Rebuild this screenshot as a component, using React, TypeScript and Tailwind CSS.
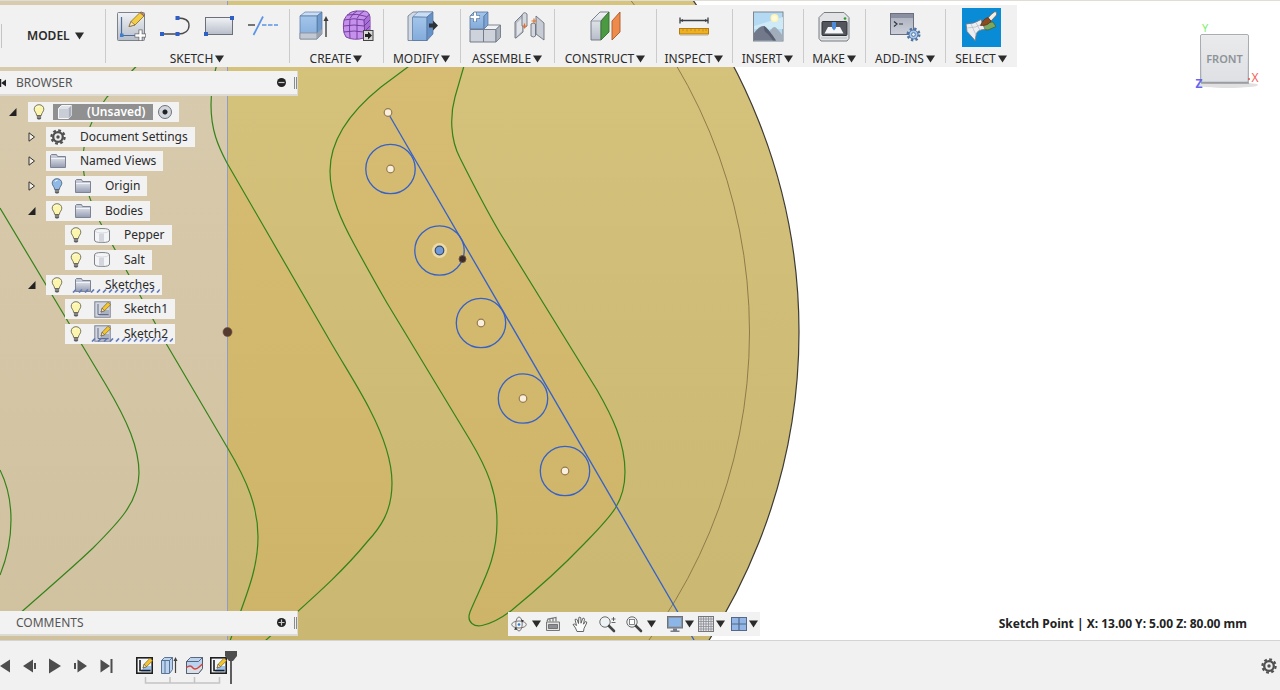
import type { ReactNode } from "react"

const BLUE = "#2f5fc4"

/* ---------- shared bits ---------- */

function Caret({ className = "" }: { className?: string }) {
  return (
    <svg viewBox="0 0 9 8" className={`h-2 w-[9px] shrink-0 ${className}`} aria-hidden="true">
      <path d="M0 0.5h9L4.5 7.5z" fill="#2b2b2b" />
    </svg>
  )
}

function ToolIcon({ children }: { children: ReactNode }) {
  return (
    <svg viewBox="0 0 30 32" className="h-8 w-[30px] overflow-visible" aria-hidden="true">
      {children}
    </svg>
  )
}

/* ---------- toolbar icons ---------- */

const icons = {
  sketch: (
    <ToolIcon>
      <rect x="1.500" y="1.500" width="27" height="28" rx="1" fill="url(#steel)" stroke="#7c828c" />
      <path d="M5.500 6v18.500H21" fill="none" stroke="#4c6a9c" strokeWidth="1.200" />
      <rect x="4" y="22.500" width="3.500" height="3.500" fill="#3f7fd0" />
      <path d="M13 15.500l2-5L24 1.500l4 3.500-9 9z" fill="#f3ce45" stroke="#8a6a1c" strokeWidth="0.800" />
      <path d="M24 1.500l1.500-0.500L28.500 3.500 28 5z" fill="#c98b7c" stroke="#7d5a49" strokeWidth="0.700" />
      <path d="M13 15.500l2-5 4 3.500z" fill="#f6e3bd" stroke="#6d5524" strokeWidth="0.600" />
      <path d="M24.500 18.500v11.500M18.500 24.500H30" stroke="#6c6c6c" strokeWidth="4" />
      <path d="M24.500 19.300v10M19.300 24.500h10" stroke="#fff" strokeWidth="2.400" />
    </ToolIcon>
  ),
  line: (
    <ToolIcon>
      <path d="M2 23h16c7 0 11-3.500 11-8.500S25 7 18 7" fill="none" stroke="#4b4b4b" strokeWidth="1.400" />
      <path d="M0 21h4v4H0zM15.500 21h4v4h-4zM15.500 5h4v4h-4z" fill={BLUE} />
    </ToolIcon>
  ),
  rect: (
    <ToolIcon>
      <rect x="1.500" y="6.500" width="27" height="17" fill="url(#steel)" stroke="#6a6f7a" />
      <path d="M0 21h4v4H0zM26 5h4v4h-4z" fill={BLUE} />
    </ToolIcon>
  ),
  trim: (
    <ToolIcon>
      <path d="M0 14h7" stroke="#4b4b4b" strokeWidth="1.500" />
      <path d="M5.500 24L15 5.500" stroke="#5b94e6" strokeWidth="1.700" />
      <path d="M14 14h16" stroke="#5b94e6" strokeWidth="1.500" strokeDasharray="4.500 1.500" />
    </ToolIcon>
  ),
  extrude: (
    <ToolIcon>
      <path d="M1 5l5-4h17l-5 4z" fill="#c9def4" stroke="#5c7da6" strokeWidth="0.700" />
      <path d="M18 5l5-4v22l-5 5z" fill="#6f9ccd" stroke="#55739c" strokeWidth="0.700" />
      <path d="M1 5h17v23H1z" fill="url(#bluebox)" stroke="#55739c" strokeWidth="0.700" />
      <path d="M1 22h17v6H1z" fill="#c3c8d2" stroke="#7d8694" strokeWidth="0.700" />
      <path d="M18 22l5-4v5l-5 5z" fill="#9ba2af" />
      <path d="M27 26V8" stroke="#3e3e3e" strokeWidth="1.400" />
      <path d="M24.500 10L27 5l2.500 5z" fill="#3e3e3e" />
    </ToolIcon>
  ),
  form: (
    <ToolIcon>
      <path d="M1 9Q5 0.500 13 0h8q5 0 6 6v13q-2 6-6 8-10 3-18-1Q-1 20 1 9z" fill="#c591ec" stroke="#7a45a5" />
      <path d="M20.500 9l5-5q3 8 1 16l-5 6q1-9-1-17z" fill="#a96dd6" />
      <path d="M7 8q-1 9 0 19M14 8q0 10 0 20M21 9q1 9 0 18M0.500 15q11-2 20.500 0l6-6M0.500 21q11-2 20.500 0l6-6M1 9q10-2.500 20 0l5.500-6M7 7.500Q9 3 14 0M14 7.500Q16 3 21 0M4 4q10-2 19.500 1.500" fill="none" stroke="#6b3796" strokeWidth="0.900" />
      <rect x="20.500" y="19.500" width="9.500" height="10" fill="#d8d8d8" stroke="#444" />
      <path d="M22 23h3v-2.500l4 4-4 4V26h-3z" fill="#222" />
    </ToolIcon>
  ),
  modify: (
    <ToolIcon>
      <path d="M1 5l5-4h20l-6 5v23.500H1z" fill="#d3d9e3" stroke="#66758e" strokeWidth="0.800" />
      <path d="M5.500 6H20v23.500H5.500z" fill="url(#bluebox)" stroke="#55739c" strokeWidth="0.700" />
      <path d="M6 5.500L11 1h15l-6 5z" fill="#c9def4" stroke="#5c7da6" strokeWidth="0.600" />
      <path d="M20 6l6-5v22l-6 6.500z" fill="#6692c8" stroke="#55739c" strokeWidth="0.700" />
      <path d="M22 12.500h4V9.500l5 5-5 5v-3h-4z" fill="#2e3338" />
    </ToolIcon>
  ),
  component: (
    <ToolIcon>
      <path d="M0 5l4-4h14l-4 4v13H0z" fill="url(#bluebox)" stroke="#55739c" strokeWidth="0.800" />
      <path d="M14 5l4-4v14l-4 3z" fill="#7fa5d6" stroke="#55739c" strokeWidth="0.700" />
      <path d="M0 18.500h13.500V31H0zM13.500 18.500H26V31H13.500z" fill="#cdd2db" stroke="#737b88" />
      <path d="M13.500 18.500l4.500-4.500h12.500l-4.500 4.500z" fill="#f0f2f5" stroke="#737b88" strokeWidth="0.900" />
      <path d="M26 18.500l4.500-4.500v12.500L26 31z" fill="#aab1bd" stroke="#737b88" strokeWidth="0.900" />
      <path d="M5 1v10M0 6h10" stroke="#59789e" strokeWidth="3.800" />
      <path d="M5 1.500v9M0.500 6h9" stroke="#fff" strokeWidth="2.300" />
    </ToolIcon>
  ),
  joint: (
    <ToolIcon>
      <path d="M1 11L9 3v18l-7 6H1z" fill="#b9bec8" stroke="#6b727e" strokeWidth="0.900" />
      <path d="M3 12l5-5v13l-5 5z" fill="#e1e4e9" />
      <path d="M8 4q2-4 5-1v12q-2 3-5 0z" fill="#d3d7de" stroke="#6b727e" strokeWidth="0.900" />
      <path d="M17 13q2-2 4.500 0v12q-2 2-4.500 0z" fill="#d3d7de" stroke="#6b727e" strokeWidth="0.900" />
      <path d="M22 5l8 7v17l-8-6z" fill="#c6cbd4" stroke="#6b727e" strokeWidth="0.900" />
      <path d="M10.500 12.500v5M8 15h5M20 7.500v5M17.500 10h5" stroke="#e2702a" strokeWidth="1.200" />
    </ToolIcon>
  ),
  construct: (
    <ToolIcon>
      <path d="M1 10l9-9h9l-8 9v19H1z" fill="url(#steel)" stroke="#6c7480" strokeWidth="0.900" />
      <path d="M11 10l8-9v20l-8 8z" fill="#4b9a42" stroke="#356f30" strokeWidth="0.900" />
      <path d="M1 10h10" stroke="#8a919c" strokeWidth="0.800" />
      <path d="M22 10l8-9v20l-8 8z" fill="#ee8a4b" stroke="#a85a28" strokeWidth="0.900" />
    </ToolIcon>
  ),
  inspect: (
    <ToolIcon>
      <path d="M1 9.500h28M1 6.500v6M29 6.500v6" stroke="#3b4046" strokeWidth="1.300" />
      <path d="M1 9.500l3-1.500v3zM29 9.500L26 8v3z" fill="#3b4046" />
      <rect x="0.500" y="17.500" width="29" height="5.500" fill="#efb021" stroke="#b27c12" />
      <path d="M4 18v2M8 18v2.500M12 18v2M16 18v2.500M20 18v2M24 18v2.500M27 18v2" stroke="#b78320" strokeWidth="0.700" />
      <path d="M1 24.500h28" stroke="#cfcfcf" />
    </ToolIcon>
  ),
  insert: (
    <ToolIcon>
      <rect x="0.500" y="1" width="29.500" height="29" fill="#b3daf2" stroke="#7f868f" />
      <path d="M1 15l29-9v12H1z" fill="#cdeaf6" />
      <circle cx="21.500" cy="7" r="4" fill="#fff4b5" />
      <circle cx="21.500" cy="7" r="2.600" fill="#fffad9" />
      <path d="M10 29.500Q19 15 22 16q3 2 8 9v4.500z" fill="#a2adbb" />
      <path d="M1 22q6-8 10-7 3 1 12 14.500H1z" fill="#71798a" />
      <path d="M11 15q-1 5 4 8l5 6.500h3Q14 16 11 15z" fill="#565e70" />
    </ToolIcon>
  ),
  make: (
    <ToolIcon>
      <path d="M5 1.500h20l5 5v21l-2 2.500H2l-2-2.500v-21z" fill="#e1e3e5" stroke="#777c82" />
      <rect x="3" y="10.500" width="25" height="14" rx="1" fill="#53565c" stroke="#2f3236" />
      <path d="M9 16h12l3.500 6.500h-19z" fill="#f6f7f8" />
      <path d="M13 11h4v6l-2 2.500-2-2.500z" fill="#4d8cd8" />
      <circle cx="26" cy="7.500" r="1.300" fill="#2d9b2d" />
      <path d="M2 27h26" stroke="#b8bcc1" />
    </ToolIcon>
  ),
  addins: (
    <ToolIcon>
      <rect x="0.500" y="2.500" width="23" height="21" fill="url(#script)" stroke="#6b7080" />
      <path d="M1 3h22v4H1z" fill="#8a90a1" />
      <path d="M4 10.500l3 2.500-3 2.500M9 13h4" fill="none" stroke="#30343f" strokeWidth="1.200" />
      <circle cx="23.500" cy="23.500" r="5.500" fill="none" stroke="#4f74a3" strokeWidth="3" strokeDasharray="2.200 2.120" />
      <circle cx="23.500" cy="23.500" r="4.500" fill="#a9c7ea" stroke="#4f74a3" />
      <circle cx="23.500" cy="23.500" r="1.900" fill="#eef4fb" stroke="#4f74a3" />
    </ToolIcon>
  ),
  select: (
    <span className="flex size-[39px] items-center justify-center bg-[#0a8bd6]">
      <ToolIcon>
        <path d="M14 12l13-1 3 4.500-8 3.500-8-1z" fill="#79a860" stroke="#3e6433" strokeWidth="0.800" />
        <path d="M0 13Q8 13 15 8.500l4 10q-7 0-8.500 4-1 3-1 7.500L1 20.500z" fill="#eceef1" stroke="#6f7b88" strokeWidth="0.900" />
        <path d="M5 13l5 11M10 11.500l4 8M0.800 17q9 0 16-4" fill="none" stroke="#aab2bc" strokeWidth="0.600" />
        <path d="M29 0.500q2.500 1 1.500 3.500L25 10l-3-3q3-4 7-6.500z" fill="#f6efe4" stroke="#6d5b4b" strokeWidth="0.700" />
        <path d="M14.500 14.500Q17 8 22 6.500l3 3.500q-3 5-10.500 4.500z" fill="#8a4b22" stroke="#5a2d12" strokeWidth="0.700" />
      </ToolIcon>
    </span>
  ),
}

interface ToolGroup {
  label: string
  width: string
  icons: (keyof typeof icons)[]
}

const toolGroups: ToolGroup[] = [
  { label: "SKETCH", width: "w-[184px]", icons: ["sketch", "line", "rect", "trim"] },
  { label: "CREATE", width: "w-[94px]", icons: ["extrude", "form"] },
  { label: "MODIFY", width: "w-[77px]", icons: ["modify"] },
  { label: "ASSEMBLE", width: "w-[94px]", icons: ["component", "joint"] },
  { label: "CONSTRUCT", width: "w-[102px]", icons: ["construct"] },
  { label: "INSPECT", width: "w-[76px]", icons: ["inspect"] },
  { label: "INSERT", width: "w-[71px]", icons: ["insert"] },
  { label: "MAKE", width: "w-[62px]", icons: ["make"] },
  { label: "ADD-INS", width: "w-[80px]", icons: ["addins"] },
  { label: "SELECT", width: "w-[72px]", icons: ["select"] },
]

function Toolbar() {
  return (
    <header className="flex h-[62px] w-fit bg-[#f1f1f1]">
      <div className="flex w-[105px] items-center">
        <span className="h-6 w-0.5 border-r border-[#c4c4c4]" />
        <button type="button" className="ml-[25px] flex items-center gap-[5px] text-xs font-semibold text-[#2b2b2b]">
          MODEL
          <Caret />
        </button>
      </div>
      {toolGroups.map((group) => (
        <div key={group.label} className={`relative flex flex-col ${group.width}`}>
          <span className="absolute top-1 bottom-1 left-0 w-px bg-[#cbcbcb]" />
          <div className="flex h-[46px] items-center justify-center gap-3.5 pb-0.5">
            {group.icons.map((name) => (
              <button key={name} type="button" aria-label={`${group.label} ${name}`}>
                {icons[name]}
              </button>
            ))}
          </div>
          <button type="button" className="flex h-4 items-center justify-center gap-0.5 text-xs text-[#2b2b2b]">
            {group.label}
            <Caret />
          </button>
        </div>
      ))}
    </header>
  )
}

/* ---------- browser tree ---------- */

function Bulb({ off = false }: { off?: boolean }) {
  return (
    <svg viewBox="0 0 12 16" className="h-4 w-3" aria-hidden="true">
      <path
        d="M6 0.700C3 0.700 1.200 2.700 1.200 5.200c0 2.400 2.300 3.600 2.500 6.300h4.600c0.200-2.700 2.500-3.900 2.500-6.300C10.800 2.700 9 0.700 6 0.700z"
        fill={off ? "#8fb9e6" : "#fbf5ae"}
        stroke={off ? "#51657d" : "#6d6a4e"}
        strokeWidth="0.900"
      />
      <path d="M4 3.500q1-1.300 2.500-1.200" stroke="#fff" fill="none" />
      <path d="M3.900 11.500h4.200v3L7 15.500H5l-1.100-1z" fill="#5b5b5b" />
      <path d="M4.200 13h3.600" stroke="#d4d4d4" strokeWidth="0.700" />
    </svg>
  )
}

function Gear() {
  return (
    <svg viewBox="0 0 16 16" className="size-4" aria-hidden="true">
      <circle cx="8" cy="8" r="6.600" fill="none" stroke="#505050" strokeWidth="2.200" strokeDasharray="2.800 2.384" />
      <circle cx="8" cy="8" r="4.800" fill="#ededed" stroke="#505050" strokeWidth="2.300" />
      <circle cx="8" cy="8" r="1.700" fill="#505050" />
    </svg>
  )
}

function Folder() {
  return (
    <svg viewBox="0 0 16 14" className="h-3.5 w-4" aria-hidden="true">
      <path d="M0.500 13.500V1.500l1-1h5l1 2h8v11z" fill="#c4c9d6" stroke="#7d8392" />
      <path d="M1 5h14v8H1z" fill="url(#steelDark)" />
      <path d="M1 4.500h14" stroke="#f2f3f6" />
    </svg>
  )
}

function Body() {
  return (
    <svg viewBox="0 0 16 15" className="h-[15px] w-4" aria-hidden="true">
      <path d="M0.500 3q0-2.500 7.500-2.500T15.500 3v9q0 2.500-7.500 2.500T0.500 12z" fill="#f4f5f6" stroke="#74777c" strokeWidth="0.900" />
      <path d="M5 5.500h5v8.600q-3 0.400-5 0z" fill="#d3d6dc" />
      <path d="M0.900 3q1.500 2 7.100 2t7.100-2" fill="none" stroke="#d2d5d9" strokeWidth="0.800" />
    </svg>
  )
}

function SketchIcon({ dark = false }: { dark?: boolean }) {
  return (
    <svg viewBox="0 0 17 17" className="size-[17px] overflow-visible" aria-hidden="true">
      <rect x="0.800" y="0.800" width="15.400" height="15.400" fill={dark ? "#f3f6fb" : "#d2d6e0"} stroke={dark ? "#1f1f1f" : "#7b8190"} strokeWidth={dark ? 1.600 : 1} />
      <path d="M8 9h7v6H5z" fill={dark ? "#9cc3ee" : "#a9b1c3"} />
      <path d="M4 3v10.500h10.500" fill="none" stroke={dark ? "#1f1f1f" : "#626c86"} strokeWidth={dark ? 1.600 : 1} />
      <path d="M7 11l1.200-3.800L14 1.200l2.600 2.500L10.500 9.700z" fill="#f4c62c" stroke="#7f6420" strokeWidth="0.700" />
      <path d="M7 11l1.200-3.800 2.300 2.500z" fill="#f7e6c4" stroke="#4c3d1c" strokeWidth="0.500" />
    </svg>
  )
}

function RootCube() {
  return (
    <svg viewBox="0 0 14 14" className="size-3.5" aria-hidden="true">
      <path d="M0.500 3.500l3-3h10v10l-3 3h-10z" fill="#dfe2e8" stroke="#f7f7f7" />
      <path d="M10.500 3.500l3-3v10l-3 3z" fill="#a9aeb9" />
      <path d="M1 4h9.500v9H1z" fill="#c9cdd6" />
    </svg>
  )
}

interface TreeNode {
  label: string
  icon: ReactNode
  indent: string
  bulb?: "on" | "off"
  state?: "open" | "closed"
  hatched?: boolean
}

const tree: TreeNode[] = [
  { label: "Document Settings", icon: <Gear />, indent: "pl-6", state: "closed" },
  { label: "Named Views", icon: <Folder />, indent: "pl-6", state: "closed" },
  { label: "Origin", icon: <Folder />, indent: "pl-6", bulb: "off", state: "closed" },
  { label: "Bodies", icon: <Folder />, indent: "pl-6", bulb: "on", state: "open" },
  { label: "Pepper", icon: <Body />, indent: "pl-[43px]", bulb: "on" },
  { label: "Salt", icon: <Body />, indent: "pl-[43px]", bulb: "on" },
  { label: "Sketches", icon: <Folder />, indent: "pl-6", bulb: "on", state: "open", hatched: true },
  { label: "Sketch1", icon: <SketchIcon />, indent: "pl-[43px]", bulb: "on" },
  { label: "Sketch2", icon: <SketchIcon />, indent: "pl-[43px]", bulb: "on", hatched: true },
]

function Toggle({ state }: { state?: "open" | "closed" }) {
  if (!state) return <span className="w-[22px]" />
  return (
    <button type="button" aria-label={state === "open" ? "Collapse" : "Expand"} className="flex w-[22px] justify-start pl-1">
      <svg viewBox="0 0 8 10" className="h-2.5 w-2" aria-hidden="true">
        {state === "open" ? (
          <path d="M7.500 1v8H0z" fill="#222" />
        ) : (
          <path d="M1 0.800L6.500 5 1 9.200z" fill="#f4efe6" stroke="#333" />
        )}
      </svg>
    </button>
  )
}

function PanelTitle({ title, open }: { title: string; open: boolean }) {
  return (
    <div className="flex h-[25px] w-[298px] items-center border-r border-b-2 border-[#dcdad2] bg-[#f2f2f2] text-xs text-[#555]">
      <svg viewBox="0 0 6 8" className="h-2 w-1.5" aria-hidden="true">
        {open && <path d="M0 0h1.200v8H0zM6 0.500v7L1.200 4z" fill="#222" />}
      </svg>
      <h2 className="ml-2.5">{title}</h2>
      <button type="button" aria-label={open ? "Minimize" : "Expand"} className="ml-auto">
        <svg viewBox="0 0 9 9" className="size-[9px]" aria-hidden="true">
          <circle cx="4.500" cy="4.500" r="4.500" fill="#242424" />
          <path d={open ? "M1.500 4.500h6" : "M1.500 4.500h6M4.500 1.500v6"} stroke="#c9c9c9" strokeWidth="1.200" />
        </svg>
      </button>
      <span className="ml-2 h-3 w-[3px] border-x border-[#8a8a8a]" />
    </div>
  )
}

function BrowserTree() {
  return (
    <ul className="mt-1.5 flex h-[242px] flex-col justify-between text-xs text-[#2b2b2b]">
      <li className="flex h-5 items-center pl-[5px]">
        <span className="flex w-[23px]">
          <Toggle state="open" />
        </span>
        <div className="flex h-5 items-center bg-[#f2f2f2] pr-[7px] pl-[5px]">
          <Bulb />
          <button type="button" className="ml-2 flex h-4 items-center gap-[15px] bg-[#909090] pr-2 pl-[5px] font-semibold text-white">
            <RootCube />
            (Unsaved)
          </button>
          <input
            type="radio"
            name="active"
            aria-label="Activate component"
            defaultChecked
            className="ml-[5px] size-3.5 appearance-none rounded-full border border-[#6d7078] bg-[radial-gradient(circle,#222_0_2px,#d3d6df_3px)]"
          />
        </div>
      </li>
      {tree.map((node) => (
        <li key={node.label} className={`flex h-5 items-center ${node.indent}`}>
          <Toggle state={node.state} />
          <button
            type="button"
            className={`relative flex h-5 items-center bg-[#f2f2f2] pr-[7px] ${node.bulb ? "pl-1" : "pl-[3px]"}`}
          >
            {node.bulb && (
              <span className="mr-2 flex w-4 pl-px">
                <Bulb off={node.bulb === "off"} />
              </span>
            )}
            <span className="flex w-[18px] justify-center">{node.icon}</span>
            <span className="ml-[13px]">{node.label}</span>
            {node.hatched && (
              <svg className="absolute bottom-0.5 left-[26px] h-1 w-[calc(100%-28px)]" aria-hidden="true">
                <rect width="100%" height="4" fill="url(#hatch)" />
              </svg>
            )}
          </button>
        </li>
      ))}
    </ul>
  )
}

/* ---------- canvas ---------- */

const holes = [
  [390.500, 169],
  [439.500, 250.500],
  [481, 323],
  [523, 398.500],
  [565, 471],
]

const pepperP =
  "M428 52L381 87C350 112 330 140 330 171C330 197 342 222 354 244C366 266 376 284 387 303L470 440C488 470 497 493 497 522C497 560 483 581 470 612C466 623 475 627 482 625.500C494 623 503 617 512 610C540 587 560 569 583 545C610 517 625 504 625 472C625 442 612 416 597 390L500 233C490 216 470 178 460 158C450 139 450 115 455 97L468 52"
const waveRight =
  "M220 52C214 75 211 85 211 105C211 130 218 146 227 163L330 341C347 370 360 390 370 410C384 437 392 460 392 483C392 512 380 528 367 542C340 575 310 600 265 641"
const waveMid =
  "M150 52L107 97C90 120 83 140 83 160C83 185 92 206 100 222L167 345L227 447C248 482 258 508 258 537C258 572 244 600 230 641"
const waveLeft = "M0 208L82 345L106 385C128 422 139 448 139 473C139 502 118 523 93 548C70 570 46 590 10 622"

function Canvas() {
  return (
    <svg
      viewBox="0 0 1280 640"
      preserveAspectRatio="xMinYMid slice"
      className="absolute inset-0 h-full w-full"
      role="img"
      aria-label="Model viewport"
    >
      <defs>
        <linearGradient id="steel" x1="0" y1="0" x2="0" y2="1">
          <stop offset="0" stopColor="#f0f2f5" />
          <stop offset="1" stopColor="#b7bdc9" />
        </linearGradient>
        <linearGradient id="steelDark" x1="0" y1="0" x2="0" y2="1">
          <stop offset="0" stopColor="#d3d7e1" />
          <stop offset="1" stopColor="#989fb4" />
        </linearGradient>
        <linearGradient id="bluebox" x1="0" y1="0" x2="0" y2="1">
          <stop offset="0" stopColor="#a3c5ea" />
          <stop offset="1" stopColor="#83abdb" />
        </linearGradient>
        <linearGradient id="script" x1="0" y1="0" x2="0" y2="1">
          <stop offset="0" stopColor="#a9aebc" />
          <stop offset="1" stopColor="#cdd0da" />
        </linearGradient>
        <linearGradient id="khaki" gradientUnits="userSpaceOnUse" x1="0" y1="0" x2="0" y2="640">
          <stop offset="0" stopColor="#d6c47d" />
          <stop offset="1" stopColor="#c9b772" />
        </linearGradient>
        <linearGradient id="ochre" gradientUnits="userSpaceOnUse" x1="0" y1="60" x2="0" y2="640">
          <stop offset="0" stopColor="#d7bd73" />
          <stop offset="1" stopColor="#cdb468" />
        </linearGradient>
        <linearGradient id="plane" gradientUnits="userSpaceOnUse" x1="0" y1="0" x2="0" y2="640">
          <stop offset="0" stopColor="#d9cbae" />
          <stop offset="1" stopColor="#d0c19f" />
        </linearGradient>
        <pattern id="hatch" width="6" height="4" patternUnits="userSpaceOnUse">
          <path d="M1 3.500L4 0.500" stroke="#6279b8" strokeWidth="1.700" />
        </pattern>
        <clipPath id="rightHalf">
          <path d="M227.500 0H1280V640H227.500z" />
        </clipPath>
      </defs>

      <circle cx="227" cy="332" r="572" fill="url(#khaki)" stroke="#3c3a34" strokeWidth="1.200" />
      <circle cx="227" cy="332" r="522.500" fill="none" stroke="#8d7c49" />
      <path d={pepperP} fill="url(#ochre)" />
      <g clipPath="url(#rightHalf)">
        <path d={`${waveRight}H230C244 600 258 572 258 537C258 508 248 482 227 447V163z`} fill="url(#ochre)" />
      </g>
      <path d="M0 0H227.500V640H0z" fill="url(#plane)" />
      <path d="M227.500 0V640" stroke="#8f9dc4" />

      <g fill="none" stroke="#33831a" strokeWidth="1.200">
        <path d={pepperP} />
        <path d={waveRight} />
        <path d={waveMid} />
        <path d={waveLeft} />
        <path d="M0 470Q11 492 11 520T0 575" />
      </g>

      <g fill="none" stroke="#3561c8" strokeWidth="1.300">
        <path d="M388 113L694 640" />
        {holes.map(([cx, cy]) => (
          <circle key={cx} cx={cx} cy={cy} r="24.700" />
        ))}
      </g>

      {[[388, 112.500], ...holes].map(([cx, cy]) =>
        cx === 439.500 ? (
          <g key={cx}>
            <circle cx={cx} cy={cy} r="7.500" fill="#f1e3b8" opacity="0.800" />
            <circle cx={cx} cy={cy} r="4.300" fill="#6f9bdc" stroke="#3b4a63" strokeWidth="1.200" />
          </g>
        ) : (
          <circle key={cx} cx={cx} cy={cy} r="3.800" fill="#f8efdc" stroke="#96794f" strokeWidth="1.200" />
        ),
      )}
      <circle cx="462.500" cy="259" r="3.500" fill="#3a2b28" stroke="#6d5547" />
      <circle cx="227.500" cy="332" r="4.500" fill="#553a2f" stroke="#6c4d3d" strokeWidth="0.600" />
    </svg>
  )
}

function ViewCube() {
  return (
    <div className="absolute top-5 right-5 flex flex-col items-center" aria-label="View cube">
      <svg viewBox="0 0 68 72" className="h-[72px] w-[68px]">
        <ellipse cx="36" cy="65" rx="30" ry="3" fill="#000" opacity="0.120" />
        <rect x="8.500" y="14.500" width="48" height="48" rx="1.500" fill="url(#steel)" stroke="#a9acb0" />
        <rect x="9.500" y="15.500" width="46" height="46" rx="1" fill="#e8e9ea" opacity="0.800" />
        <path d="M9 63h48" stroke="#98999b" strokeWidth="1.500" />
        <circle cx="57" cy="59" r="1" fill="#e05050" />
        <g fontFamily="Noto Sans, Liberation Sans, sans-serif" textAnchor="middle">
          <text x="32.500" y="43" fontSize="11" fontWeight="600" fill="#8d9498">
            FRONT
          </text>
          <text x="13" y="12" fontSize="11" fill="#7fee6c">
            Y
          </text>
          <text x="63" y="62" fontSize="12" fill="#f4605c">
            X
          </text>
          <text x="7" y="68" fontSize="12" fontWeight="700" fill="#6464f0">
            Z
          </text>
        </g>
      </svg>
    </div>
  )
}

/* ---------- navigation bar ---------- */

function NavIcon({ label, children, className = "" }: { label: string; children: ReactNode; className?: string }) {
  return (
    <button type="button" aria-label={label} className={`flex shrink-0 items-center ${className}`}>
      <svg viewBox="0 0 16 16" className="size-4 overflow-visible" aria-hidden="true">
        {children}
      </svg>
    </button>
  )
}

function NavBar() {
  return (
    <nav className="flex h-6 items-center bg-[#f2f2f2] pr-0.5 pl-[3px]">
      <NavIcon label="Orbit">
        <ellipse cx="8" cy="8" rx="3.200" ry="7" fill="none" stroke="#6b6b6b" strokeWidth="0.900" />
        <ellipse cx="8" cy="8.500" rx="7.300" ry="3.500" fill="none" stroke="#6b6b6b" strokeWidth="0.900" />
        <circle cx="8" cy="8.500" r="1.300" fill="#3a76d6" />
        <path d="M10 3.500l3 1-2 2zM5 11l-2 2.500 3 0.500z" fill="#333" />
      </NavIcon>
      <Caret className="ml-[5px]" />
      <NavIcon label="Look At" className="ml-1">
        <path d="M1.500 6h13v8.500h-13z" fill="#e4e4e4" stroke="#777" />
        <path d="M3.500 8.500h9v4h-9z" fill="#8d8f94" stroke="#555" strokeWidth="0.700" />
        <path d="M2 5.500l1-2.500 8-1.500v4M5 3v2.500M8 2v3.500" fill="none" stroke="#777" strokeWidth="1.200" />
      </NavIcon>
      <NavIcon label="Pan" className="ml-[11px]">
        <path
          d="M5 15.500Q4 12 1 8.500q1-1.500 3.500 1L3 3.500q1.500-1.200 2.300 0.500L6.500 7.500 6.800 1.500q1.400-1 2 0.300L9 7.200l1.800-4.900q1.500-0.600 1.700 0.900l-1 5 2-2.700q1.500 0 1.200 1.500L12 12.500l-0.500 3z"
          fill="#fafafa"
          stroke="#555"
          strokeWidth="0.900"
        />
      </NavIcon>
      <NavIcon label="Zoom" className="ml-[11px]">
        <circle cx="6" cy="6" r="5.200" fill="#eef2f5" stroke="#6a6a6a" />
        <path d="M10 10l5 5" stroke="#444" strokeWidth="2.600" strokeLinecap="round" />
        <path d="M12.500 3h4M14.500 1v4M12.500 6.500h4" stroke="#444" strokeWidth="0.800" />
      </NavIcon>
      <NavIcon label="Fit" className="ml-[11px]">
        <circle cx="6" cy="6" r="5.200" fill="#eef2f5" stroke="#6a6a6a" />
        <rect x="3.500" y="3.500" width="5" height="5" fill="#fff" stroke="#6a6a6a" strokeWidth="0.800" />
        <path d="M10 10l5 5" stroke="#444" strokeWidth="2.600" strokeLinecap="round" />
      </NavIcon>
      <Caret className="ml-[5px]" />
      <NavIcon label="Display Settings" className="ml-[11px]">
        <rect x="0.500" y="0.500" width="15" height="11.500" fill="#8b929d" stroke="#6c727c" />
        <rect x="2" y="2" width="12" height="8.500" fill="#8db6e8" />
        <path d="M6 12.500h4v2H6zM3.500 14.500h9V16h-9z" fill="#777c86" />
      </NavIcon>
      <Caret className="ml-0.5" />
      <NavIcon label="Grid and Snaps" className="ml-1">
        <rect x="0.500" y="0.500" width="15" height="15" fill="#e4e4e8" stroke="#777" />
        <path d="M3 1v14M5.500 1v14M8 1v14M10.500 1v14M13 1v14M1 3h14M1 5.500h14M1 8h14M1 10.500h14M1 13h14" stroke="#8c8e95" strokeWidth="0.800" />
      </NavIcon>
      <Caret className="ml-0.5" />
      <NavIcon label="Viewports" className="ml-1.5">
        <rect x="0.500" y="1.500" width="15" height="13" fill="#93b6e4" stroke="#51698c" />
        <path d="M8 2v12M1 8h14" stroke="#51698c" strokeWidth="1.200" />
      </NavIcon>
      <Caret className="ml-0.5" />
    </nav>
  )
}

/* ---------- timeline ---------- */

const playback = [
  { label: "Go to start", d: "M10 1.500v13L0 8z" },
  { label: "Step back", d: "M8 1.500v13L-2 8zM9 5h2v6H9z" },
  { label: "Play", d: "M-1 0.500v15L11 8z" },
  { label: "Step forward", d: "M-1 5h2v6h-2zM2.500 1.500v13L12 8z" },
  { label: "Go to end", d: "M0.500 1.500v13L10 8zM10.500 1h2v14h-2z" },
]

function Timeline() {
  return (
    <footer className="flex h-[50px] items-center justify-between border-t border-[#d4d4d4] bg-[#f1f1f1] pr-[3px]">
      <div className="flex items-center">
        <div className="flex items-center gap-[11px]">
          {playback.map((step) => (
            <button key={step.label} type="button" aria-label={step.label}>
              <svg viewBox="0 0 14 16" className="h-4 w-3.5 overflow-visible" aria-hidden="true">
                <path d={step.d} fill="#4d4d4d" />
              </svg>
            </button>
          ))}
        </div>
        <svg viewBox="0 0 104 40" className="ml-[22px] h-10 w-[104px] overflow-visible" role="img" aria-label="Timeline">
          <svg x="0" y="11" width="17" height="17">
            <SketchIcon dark />
          </svg>
          <g transform="translate(25 11)" stroke="#4e6688" strokeWidth="0.900">
            <path d="M0.500 3.500l3-3h8v12l-3 4h-8z" fill="#b9d3f0" />
            <path d="M4 4v12M0.500 3.500h8v12.500M8.500 3.500l3-3" fill="none" />
            <path d="M14.500 16V3" stroke="#444" strokeWidth="1.200" />
            <path d="M12.500 4l2-4 2 4z" fill="#444" stroke="none" />
          </g>
          <g transform="translate(50 11)" stroke="#4e5a6c" strokeWidth="0.900">
            <path d="M0.500 4.500l4-4h12v11l-4 5h-12z" fill="#b9d3f0" />
            <path d="M0.500 10.500h12l4-4v5l-4 5h-12z" fill="#dadee5" stroke="none" />
            <path d="M0.500 4.500h12l4-4M0.500 4.500v12h12l4-5v-11" fill="none" />
            <path d="M0.500 10.500q4-3 6 0t6 0l4-3.500" fill="none" stroke="#d6403a" strokeWidth="1.400" />
          </g>
          <svg x="74" y="11" width="17" height="17" overflow="visible">
            <SketchIcon dark />
          </svg>
          <path d="M9.500 31v6h74v-6M34 31v6M58.500 31v6" fill="none" stroke="#c4c4c4" strokeWidth="1.500" />
          <path d="M89 5h12v5l-4 5h-4l-4-5z" fill="#4d4d4d" />
          <path d="M95 9v29" stroke="#4d4d4d" strokeWidth="1.800" />
        </svg>
      </div>
      <button type="button" aria-label="Settings">
        <Gear />
      </button>
    </footer>
  )
}

export default function App() {
  return (
    <div className="flex min-h-screen flex-col bg-white font-['Noto_Sans','Liberation_Sans',sans-serif]">
      <main className="relative flex flex-1 flex-col overflow-hidden">
        <Canvas />
        <div className="relative flex flex-1 flex-col border-t border-[#e0dcd6] pt-1 pb-1">
          <Toolbar />
          <aside className="mt-1 w-fit">
            <PanelTitle title="BROWSER" open />
            <BrowserTree />
          </aside>
          <div className="mt-auto flex items-center">
            <PanelTitle title="COMMENTS" open={false} />
            <div className="ml-[210px]">
              <NavBar />
            </div>
            <p className="mr-[33px] ml-auto text-xs font-bold text-[#222]">Sketch Point | X: 13.00 Y: 5.00 Z: 80.00 mm</p>
          </div>
        </div>
        <ViewCube />
      </main>
      <Timeline />
    </div>
  )
}
